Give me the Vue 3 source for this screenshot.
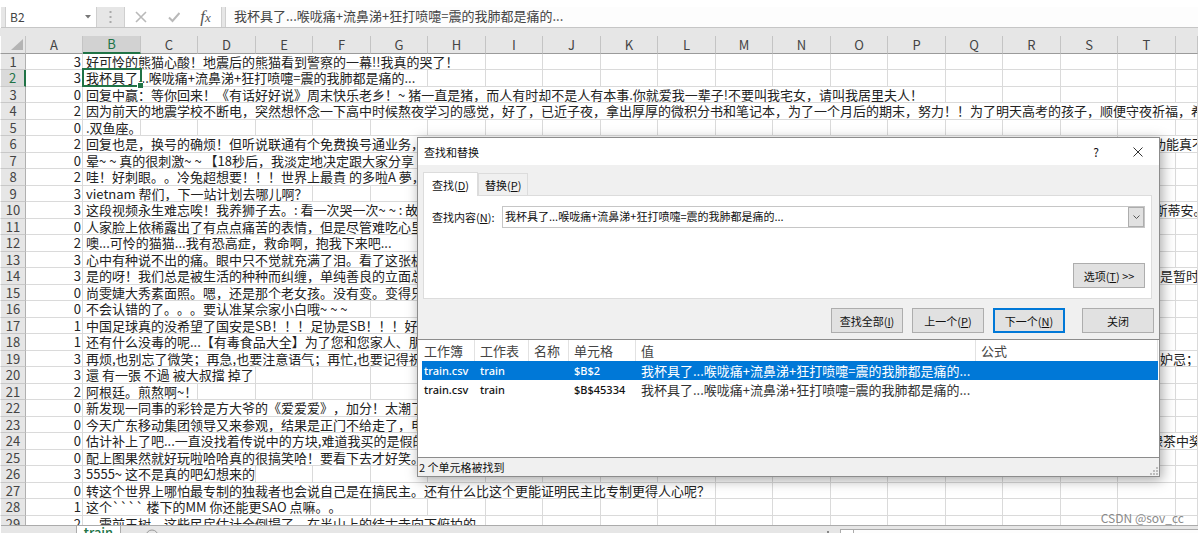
<script setup>
import { ref } from 'vue'

const phrase = '我杯具了...喉咙痛+流鼻涕+狂打喷嚏=震的我肺都是痛的...'
const nameBox = ref('B2')
const formula = ref(phrase)
const query = ref(phrase)

const letters = 'ABCDEFGHIJKLMNOPQRST'.split('').concat('')
const LAST = 20

// a: value in column A, t: text from column B, s: columns the text runs over, tail: text from column T
const rows = [
  { a: 3, t: '好可怜的熊猫心酸！地震后的熊猫看到警察的一幕!!我真的哭了！', s: 7 },
  { a: 3, t: phrase, s: 6 },
  { a: 0, t: '回复中赢：等你回来！《有话好好说》周末快乐老乡！~ 猪一直是猪，而人有时却不是人有本事.你就爱我一辈子!不要叫我宅女，请叫我居里夫人！', s: 15 },
  { a: 2, t: '因为前天的地震学校不断电，突然想怀念一下高中时候熬夜学习的感觉，好了，已近子夜，拿出厚厚的微积分书和笔记本，为了一个月后的期末，努力！！为了明天高考的孩子，顺便守夜祈福，希望', s: 20 },
  { a: 0, t: '.双鱼座。', s: 1 },
  { a: 2, t: '回复也是，换号的确烦！但听说联通有个免费换号通业务，', s: 18, tail: '有3G 功能真不' },
  { a: 0, t: '晕~ ~ 真的很刺激~ ~ 【18秒后，我淡定地决定跟大家分享', s: 10 },
  { a: 2, t: '哇！好刺眼。。冷兔超想要！！！世界上最貴 的多啦A 夢，', s: 10 },
  { a: 3, t: 'vietnam 帮们，下一站计划去哪儿啊？', s: 4 },
  { a: 3, t: '这段视频永生难忘唉！我养狮子去。: 看一次哭一次~ ~ : 故事', s: 18, tail: '克里 -斯蒂安。' },
  { a: 0, t: '人家脸上依稀露出了有点点痛苦的表情，但是尽管难吃心里', s: 10 },
  { a: 2, t: '噢...可怜的猫猫...我有恐高症，救命啊，抱我下来吧...', s: 6 },
  { a: 3, t: '心中有种说不出的痛。眼中只不觉就充满了泪。看了这张机', s: 10 },
  { a: 3, t: '是的呀！我们总是被生活的种种而纠缠，单纯善良的立面总', s: 18, tail: '它们只是暂时' },
  { a: 0, t: '尚雯婕大秀素面照。嗯，还是那个老女孩。没有变。变得只', s: 10 },
  { a: 0, t: '不会认错的了。。。要认准某佘家小白哦~ ~ ~', s: 5 },
  { a: 1, t: '中国足球真的没希望了国安是SB！！！足协是SB！！！好', s: 10 },
  { a: 1, t: '还有什么没毒的呢...【有毒食品大全】为了您和您家人、朋友', s: 10 },
  { a: 3, t: '再烦,也别忘了微笑；再急,也要注意语气；再忙,也要记得祝福', s: 18, tail: '不要有妒忌；' },
  { a: 3, t: '還 有一張 不過 被大叔擋 掉了', s: 3 },
  { a: 2, t: '阿根廷。煎熬啊~！', s: 2 },
  { a: 0, t: '新发现一同事的彩铃是方大爷的《爱爱爱》，加分！太潮了', s: 10 },
  { a: 0, t: '今天广东移动集团领导又来参观，结果是正门不给走了，电', s: 10 },
  { a: 0, t: '估计补上了吧...一直没找着传说中的方块,难道我买的是假的', s: 18, tail: '喝了 绿茶中奖' },
  { a: 0, t: '配上图果然就好玩啦哈哈真的很搞笑哈！要看下去才好笑。', s: 10 },
  { a: 3, t: '5555~ 这不是真的吧幻想来的', s: 3 },
  { a: 0, t: '转这个世界上哪怕最专制的独裁者也会说自己是在搞民主。还有什么比这个更能证明民主比专制更得人心呢？', s: 11 },
  { a: 1, t: '这个```` 楼下的MM 你还能更SAO 点嘛。。', s: 5 },
  { a: 2, t: '　震前玉树，这些民房估计全倒塌了，在半山上的结古寺向下俯拍的', s: 7 },
]
const rest = (r) => (r.tail ? 0 : LAST - r.s)

const results = [
  { book: 'train.csv', sheet: 'train', cell: '$B$2' },
  { book: 'train.csv', sheet: 'train', cell: '$B$45334' },
]
const selected = ref(0)
</script>

<template>
  <div class="app">
    <div class="formula-bar">
      <div class="name-box">
        <input v-model="nameBox" aria-label="名称框" />
        <svg width="6" height="4" viewBox="0 0 6 4"><path d="M0 0h6L3 3.5z" fill="#777" /></svg>
      </div>
      <svg class="grip" width="3" height="12" viewBox="0 0 3 12"><path d="M.5 0h2v2h-2zM.5 5h2v2h-2zM.5 10h2v2h-2z" fill="#aaa" /></svg>
      <div class="tools">
        <button aria-label="取消"><svg width="12" height="12" viewBox="0 0 12 12"><path d="M1 1l10 10M11 1L1 11" stroke="#b9b9b9" stroke-width="1.6" fill="none" /></svg></button>
        <button aria-label="输入"><svg width="12" height="12" viewBox="0 0 12 12"><path d="M1 6.5l3.5 3.5L11.500 2" stroke="#b9b9b9" stroke-width="2" fill="none" /></svg></button>
        <button class="fx" aria-label="插入函数">f<small>x</small></button>
      </div>
      <input v-model="formula" class="formula" aria-label="编辑栏" />
    </div>

    <div class="sheet">
      <table class="grid">
        <colgroup>
          <col class="c-num" />
          <col v-for="(l, i) in letters" :key="i" :class="{ 'c-odd': i < LAST && i % 2 === 0, 'c-even': i < LAST && i % 2 === 1 }" />
        </colgroup>
        <thead>
          <tr>
            <th class="corner"><svg width="12" height="11" viewBox="0 0 12 11"><path d="M12 0v11H0z" fill="#b4b4b4" /></svg></th>
            <th v-for="(l, i) in letters" :key="i" :class="{ on: l === 'B' }">{{ l }}</th>
          </tr>
        </thead>
        <tbody>
          <tr v-for="(r, n) in rows" :key="n">
            <th :class="{ on: n === 1 }">{{ n + 1 }}</th>
            <td class="num">{{ r.a }}</td>
            <td class="text" :class="{ active: n === 1 }" :colspan="r.s">{{ r.t }}<i v-if="n === 1" class="cursor"></i></td>
            <td v-if="r.tail" class="text" colspan="2">{{ r.tail }}</td>
            <td v-for="k in rest(r)" :key="k"></td>
          </tr>
        </tbody>
      </table>
    </div>

    <div class="tabs-bar">
      <button class="sheet-tab">train</button>
      <button class="add" aria-label="新工作表"><svg width="14" height="14" viewBox="0 0 14 14"><circle cx="7" cy="7" r="6" fill="none" stroke="#999" /><path d="M7 4v6M4 7h6" stroke="#999" /></svg></button>
      <div class="scroll">
        <span class="dot"></span>
        <span class="arrow"></span>
        <span class="track"></span>
      </div>
    </div>

    <section class="dialog" role="dialog" aria-label="查找和替换">
      <header>
        <h1>查找和替换</h1>
        <button class="help" aria-label="帮助">?</button>
        <button aria-label="关闭窗口"><svg width="10" height="10" viewBox="0 0 10 10"><path d="M.5.5l9 9M9.500.5l-9 9" stroke="#333" fill="none" /></svg></button>
      </header>
      <div class="body">
        <nav>
          <button class="tab current">查找(<u>D</u>)</button>
          <button class="tab">替换(<u>P</u>)</button>
        </nav>
        <div class="panel">
          <div class="field">
            <label for="query">查找内容(<u>N</u>):</label>
            <div class="combo">
              <input id="query" v-model="query" />
              <button aria-label="历史记录"><svg width="7" height="5" viewBox="0 0 7 5"><path d="M.5.5l3 3 3-3" stroke="#555" fill="none" /></svg></button>
            </div>
          </div>
          <button class="btn">选项(<u>T</u>) &gt;&gt;</button>
        </div>
        <div class="actions">
          <button class="btn">查找全部(<u>I</u>)</button>
          <button class="btn">上一个(<u>P</u>)</button>
          <button class="btn primary">下一个(<u>N</u>)</button>
          <button class="btn close">关闭</button>
        </div>
      </div>
      <div class="list">
        <table>
          <colgroup>
            <col class="w-book" /><col class="w-sheet" /><col class="w-name" /><col class="w-cell" /><col class="w-value" /><col />
          </colgroup>
          <thead>
            <tr><th>工作簿</th><th>工作表</th><th>名称</th><th>单元格</th><th>值</th><th>公式</th></tr>
          </thead>
          <tbody>
            <tr v-for="(r, i) in results" :key="i" :class="{ sel: i === selected }" @click="selected = i">
              <td>{{ r.book }}</td><td>{{ r.sheet }}</td><td></td><td>{{ r.cell }}</td><td class="value">{{ phrase }}</td><td></td>
            </tr>
          </tbody>
        </table>
      </div>
      <footer>
        <span>2 个单元格被找到</span>
        <svg width="9" height="9" viewBox="0 0 9 9"><path d="M6 0h2v2H6zM6 3h2v2H6zM3 3h2v2H3zM6 6h2v2H6zM3 6h2v2H3zM0 6h2v2H0z" fill="#bdbdbd" /></svg>
      </footer>
    </section>

    <span class="watermark">CSDN @sov_cc</span>
  </div>
</template>

<style>
body {
  margin: 0;
  overflow: hidden;
}
</style>

<style scoped>
* {
  box-sizing: border-box;
}
.app {
  position: relative;
  display: flex;
  flex-direction: column;
  height: 100vh;
  overflow: hidden;
  background: #fff;
  color: #222;
  font: 13px/16px "Noto Sans CJK SC", sans-serif;
  text-spacing-trim: space-all;
}
button,
input {
  margin: 0;
  padding: 0;
  border: 0;
  background: none;
  color: inherit;
  font: inherit;
  outline: 0;
}
svg {
  display: block;
}

.formula-bar {
  display: flex;
  align-items: stretch;
  height: 21px;
  margin: 7px 0 0 1px;
  background: #e6e6e6;
  border-bottom: 1px solid #c6c6c6;
  color: #444;
}
.name-box {
  display: flex;
  align-items: center;
  width: 92px;
  margin-left: 4px;
  padding: 0 5px 0 4px;
  background: #fff;
  border: 1px solid #cfcfcf;
  border-width: 0 1px;
}
.name-box input {
  flex: 1;
  min-width: 0;
  font-size: 12px;
}
.grip {
  align-self: center;
  margin: 0 12px;
}
.tools {
  display: flex;
  align-items: center;
  justify-content: space-around;
  width: 98px;
  background: #fff;
  border: 1px solid #cfcfcf;
  border-width: 0 1px;
}
.fx {
  font: italic 17px/18px "Liberation Serif", serif;
  color: #555;
}
.fx small {
  font-size: 13px;
}
.formula {
  flex: 1;
  min-width: 0;
  margin-left: 3px;
  padding: 0 8px 3px;
  background: #fdfdfd;
  border-left: 1px solid #cfcfcf;
}

.sheet {
  flex: 1;
  min-height: 0;
  overflow: hidden;
  padding-top: 8px;
  background: linear-gradient(#e6e6e6 8px, #fff 8px);
}
.grid {
  width: 100%;
  table-layout: fixed;
  border-collapse: separate;
  border-spacing: 0;
}
.c-num {
  width: 26px;
}
.c-odd {
  width: 57px;
}
.c-even {
  width: 58px;
}
.grid th {
  padding: 0;
  font-weight: 400;
  color: #444;
  background: #e6e6e6;
}
.grid thead th {
  height: 18px;
  line-height: 16px;
  border-right: 1px solid #c4c4c4;
  border-bottom: 1px solid #9b9b9b;
}
.grid .corner {
  border-left: 1px solid #fff;
}
.corner svg {
  margin: 0 2px 0 auto;
}
.grid thead th.on {
  background: #d2d2d2;
  color: #217346;
  border-bottom: 2px solid #217346;
}
.grid tbody th {
  border-left: 1px solid #fff;
  border-right: 1px solid #b0b0b0;
  border-bottom: 1px solid #c8c8c8;
}
.grid tbody th.on {
  background: #dadada;
  color: #217346;
  border-right: 2px solid #217346;
}
.grid tbody tr {
  height: 16px;
}
.grid tbody tr:nth-child(even) {
  height: 17px;
}
.grid tbody th,
.grid td {
  height: inherit;
  line-height: 15px;
  vertical-align: top;
}
.grid td {
  padding: 0;
  border-right: 1px solid #dadada;
  border-bottom: 1px solid #dadada;
}
.grid .num {
  padding-right: 1px;
  text-align: right;
}
.grid .text {
  padding-left: 3px;
  overflow: hidden;
  white-space: pre;
}
.grid .active {
  position: relative;
  overflow: visible;
}
.cursor {
  position: absolute;
  top: -2px;
  left: -1px;
  width: 60px;
  height: 19px;
  border: 2px solid #217346;
}
.cursor::after {
  content: "";
  position: absolute;
  right: -3px;
  bottom: -3px;
  width: 5px;
  height: 5px;
  background: #217346;
  border: 1px solid #fff;
  border-width: 1px 0 0 1px;
}

.tabs-bar {
  display: flex;
  align-items: flex-start;
  height: 8px;
  margin-left: 1px;
  overflow: hidden;
  background: #e6e6e6;
  border-top: 1px solid #ababab;
}
.sheet-tab {
  width: 45px;
  margin-left: 75px;
  background: #fff;
  border: 1px solid #ababab;
  border-width: 0 1px;
  color: #217346;
  font-weight: 500;
  line-height: 13px;
}
.add {
  margin: 3px 0 0 24px;
}
.scroll {
  display: flex;
  align-items: flex-start;
  width: 371px;
  margin: 3px 0 0 auto;
}
.dot {
  width: 2px;
  height: 2px;
  margin: 2px 11px 0 0;
  background: #888;
}
.arrow {
  width: 14px;
  height: 8px;
  background: #fff;
  border: 1px solid #ababab;
}
.track {
  flex: 1;
  height: 8px;
  background: #fdfdfd;
  border-top: 1px solid #ababab;
}

.dialog {
  position: absolute;
  top: 137px;
  left: 417px;
  right: 38px;
  background: #f0f0f0;
  border: 1px solid #8c8c8c;
  box-shadow: 2px 3px 12px rgba(0, 0, 0, 0.35);
  color: #111;
  font: 11px/16px "Noto Sans CJK SC", sans-serif;
}
.dialog header {
  display: flex;
  align-items: center;
  gap: 34px;
  height: 27px;
  padding: 0 16px 0 6px;
  background: #fff;
}
h1 {
  flex: 1;
  margin: 0;
  font-size: 11px;
  font-weight: 400;
}
.help {
  font-size: 12px;
}
.body {
  padding: 7px 5px 6px;
}
nav {
  display: flex;
  align-items: flex-end;
}
.tab {
  height: 22px;
  padding: 0 6px;
  border: 1px solid #dcdcdc;
  border-bottom: 0;
}
.tab.current {
  height: 24px;
  margin-bottom: -1px;
  padding: 0 8px;
  z-index: 1;
  background: #fff;
}
.panel {
  display: flex;
  flex-direction: column;
  justify-content: space-between;
  height: 104px;
  margin-right: 2px;
  padding: 10px 6px 10px 8px;
  background: #fff;
  border: 1px solid #dcdcdc;
}
.field {
  display: flex;
  align-items: center;
}
.field label {
  width: 70px;
}
.combo {
  flex: 1;
  display: flex;
  height: 22px;
  border: 1px solid #c6c6c6;
}
.combo input {
  flex: 1;
  min-width: 0;
  padding: 0 2px 2px;
}
.combo button {
  display: grid;
  place-items: center;
  width: 16px;
  background: #e1e1e1;
  border: 1px solid #adadad;
}
.btn {
  width: 72px;
  height: 25px;
  background: #e1e1e1;
  border: 1px solid #adadad;
}
.panel .btn {
  align-self: flex-end;
}
.actions {
  display: flex;
  justify-content: flex-end;
  gap: 9px;
  margin-top: 9px;
}
.primary {
  border: 2px solid #0078d7;
}
.close {
  margin-left: 8px;
}
.list {
  height: 119px;
  padding: 0 1px 0 4px;
  background: #fff;
  border: 1px solid #8c8c8c;
  border-width: 1px 0;
}
.list table {
  width: 100%;
  table-layout: fixed;
  border-collapse: separate;
  border-spacing: 0;
}
.w-book { width: 53px; }
.w-sheet { width: 54px; }
.w-name { width: 40px; }
.w-cell { width: 67px; }
.w-value { width: 340px; }
.list th {
  height: 21px;
  padding: 0 0 0 2px;
  border-right: 1px solid #e2e2e2;
  font-size: 13px;
  font-weight: 400;
  text-align: left;
  color: #444;
}
.list td {
  height: 19px;
  padding: 0 0 0 2px;
  font-family: "Noto Sans", "Noto Sans CJK SC", sans-serif;
  font-weight: 500;
  white-space: nowrap;
}
.list td:nth-child(n + 2),
.list th:nth-child(n + 2) {
  padding-left: 5px;
}
.list .value {
  font: 13px/16px "Noto Sans CJK SC", sans-serif;
  color: #333;
}
.list .sel td {
  background: #0078d7;
  color: #fff;
}
.dialog footer {
  display: flex;
  align-items: center;
  justify-content: space-between;
  height: 18px;
  padding-left: 1px;
}
.dialog footer svg {
  align-self: flex-end;
}
.watermark {
  position: absolute;
  right: 14px;
  bottom: 7px;
  color: #8a8a8a;
  font: 12px/16px "Noto Sans CJK SC", sans-serif;
}
</style>
